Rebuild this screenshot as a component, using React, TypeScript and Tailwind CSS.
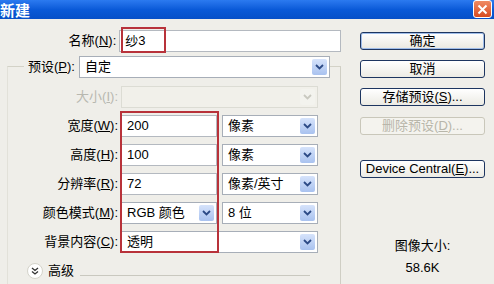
import React from "react";

const FONT = "font-['Liberation_Sans','Noto_Sans_CJK_SC',sans-serif]";

function Chevron({ disabled }: { disabled?: boolean }) {
  return (
    <span
      className={`flex h-full w-[15px] items-center justify-center rounded-[2px] ${
        disabled ? "bg-[#f3f3ee]" : "bg-gradient-to-b from-[#d6e3fb] to-[#a9c2ef]"
      }`}
    >
      <svg width="9" height="6" viewBox="0 0 9 6">
        <path
          d="M1 1 L4.5 4.5 L8 1"
          fill="none"
          stroke={disabled ? "#c9c9c0" : "#2c4a86"}
          strokeWidth="1.8"
        />
      </svg>
    </span>
  );
}

function Select({
  value,
  width,
  disabled,
}: {
  value?: string;
  width: string;
  disabled?: boolean;
}) {
  return (
    <div
      className={`flex h-[22px] ${width} items-center border ${
        disabled ? "border-[#dcdcd4] bg-[#f1f0ea]" : "border-[#a7aeb8] bg-white"
      } py-[2px] pr-[2px] pl-[5px]`}
    >
      <span className="flex-1 text-[13px] text-black">{value}</span>
      <Chevron disabled={disabled} />
    </div>
  );
}

function Input({ value }: { value: string }) {
  return (
    <div className="flex h-[22px] w-[96px] items-center border border-[#b4b9c0] bg-white pl-[5px] text-[13px] text-black">
      {value}
    </div>
  );
}

function Label({ text, hot, tail = "):", disabled }: { text: string; hot: string; tail?: string; disabled?: boolean }) {
  return (
    <span className={`text-[13px] ${disabled ? "text-[#b8b8b0]" : "text-black"}`}>
      {text}(<span className="underline">{hot}</span>
      {tail}
    </span>
  );
}

function Row({ label, children }: { label: React.ReactNode; children: React.ReactNode }) {
  return (
    <div className="flex h-[22px] items-center">
      <div className="flex w-[110px] justify-end">{label}</div>
      <div className="ml-[3px] flex gap-[5px]">{children}</div>
    </div>
  );
}

function Button({ children, primary, disabled }: { children: React.ReactNode; primary?: boolean; disabled?: boolean }) {
  return (
    <div
      className={`flex h-[18px] w-[125px] items-center justify-center rounded-[3px] border text-[13px] ${
        disabled
          ? "border-[#c9c7ba] bg-[#f4f3ee] text-[#b8b6aa]"
          : primary
          ? "border-[#1d3560] bg-gradient-to-b from-white to-[#e9e8e0] text-black shadow-[inset_0_0_0_1px_#9fbde9]"
          : "border-[#1d3560] bg-gradient-to-b from-white to-[#ecebe4] text-black"
      }`}
    >
      {children}
    </div>
  );
}

export default function App() {
  return (
    <div className={`h-[284px] w-[494px] overflow-hidden bg-[#efeee9] ${FONT}`}>
      {/* Title bar */}
      <div className="flex h-[19px] items-center justify-between bg-gradient-to-b from-[#2b7af0] via-[#0a5ad8] to-[#0650c8]">
        <span className="pt-[1px] text-[15px] font-bold leading-none text-white">新建</span>
        <span className="mr-[2px] mb-[1px] flex h-[18px] w-[19px] items-center justify-center rounded-[3px] border border-white bg-gradient-to-b from-[#f08a62] to-[#d64a1f]">
          <svg width="11" height="11" viewBox="0 0 11 11">
            <path d="M1.5 1.5 L9.5 9.5 M9.5 1.5 L1.5 9.5" stroke="white" strokeWidth="2" />
          </svg>
        </span>
      </div>

      <div className="flex">
        {/* Left column */}
        <div className="w-[341px]">
          <div className="relative mt-[11px] flex h-[22px] items-center">
            <div className="flex w-[117px] justify-end">
              <Label text="名称" hot="N" />
            </div>
            <div className="ml-[3px] flex h-[22px] w-[223px] items-center border border-[#b4b9c0] bg-white pl-[5px] text-[13px]">
              纱3
            </div>
            <div className="absolute top-[-3px] left-[121px] h-[26px] w-[45px] border-2 border-[#b8323a]" />
          </div>

          {/* Preset group */}
          <div className="relative mt-[14px] ml-[7px] h-[220px] w-[334px] border-t border-r border-l border-t-[#d3d2c7] border-r-[#cfcec4] border-l-[#e2e1d9]">
            <div className="mt-[-11px] ml-[16px] flex h-[22px] w-[306px] items-center bg-[#efeee9] pl-[4px]">
              <Label text="预设" hot="P" />
              <div className="ml-[4px]">
                <Select value="自定" width="w-[251px]" />
              </div>
            </div>

            <div className="mt-[8px] flex flex-col gap-[7px]">
              <Row label={<Label text="大小" hot="I" disabled />}>
                <Select width="w-[197px]" disabled />
              </Row>
              <Row label={<Label text="宽度" hot="W" />}>
                <Input value="200" />
                <Select value="像素" width="w-[96px]" />
              </Row>
              <Row label={<Label text="高度" hot="H" />}>
                <Input value="100" />
                <Select value="像素" width="w-[96px]" />
              </Row>
              <Row label={<Label text="分辨率" hot="R" />}>
                <Input value="72" />
                <Select value="像素/英寸" width="w-[96px]" />
              </Row>
              <Row label={<Label text="颜色模式" hot="M" />}>
                <Select value="RGB 颜色" width="w-[96px]" />
                <Select value="8 位" width="w-[96px]" />
              </Row>
              <Row label={<Label text="背景内容" hot="C" />}>
                <Select value="透明" width="w-[197px]" />
              </Row>
            </div>

            <div className="absolute top-[44px] left-[112px] h-[142px] w-[99px] border-2 border-[#b8323a]" />

            <div className="mt-[8px] ml-[19px] flex items-center">
              <span className="flex h-[16px] w-[16px] items-center justify-center rounded-full border border-[#d4d3ca] bg-white">
                <svg width="8" height="8" viewBox="0 0 8 8">
                  <path d="M1 1 L4 3.5 L7 1 M1 4.5 L4 7 L7 4.5" fill="none" stroke="#333" strokeWidth="1.3" />
                </svg>
              </span>
              <span className="ml-[5px] text-[13px]">高级</span>
              <span className="mt-[10px] ml-[6px] h-px w-[230px] bg-[#c9c8bf]" />
            </div>
          </div>
        </div>

        {/* Right column */}
        <div className="ml-[19px] flex flex-col">
          <div className="mt-[13px] flex flex-col gap-[10px]">
            <Button primary>确定</Button>
            <Button>取消</Button>
            <Button>
              存储预设(<span className="underline">S</span>)...
            </Button>
            <div className="mt-[1px]">
              <Button disabled>
                删除预设(<span className="underline">D</span>)...
              </Button>
            </div>
          </div>
          <div className="mt-[25px]">
            <Button>
              Device Central(<span className="underline">E</span>)...
            </Button>
          </div>
          <div className="mt-[60px] flex w-[125px] flex-col items-center gap-[6px] text-[13px] leading-[16px]">
            <span>图像大小:</span>
            <span>58.6K</span>
          </div>
        </div>
      </div>
    </div>
  );
}
